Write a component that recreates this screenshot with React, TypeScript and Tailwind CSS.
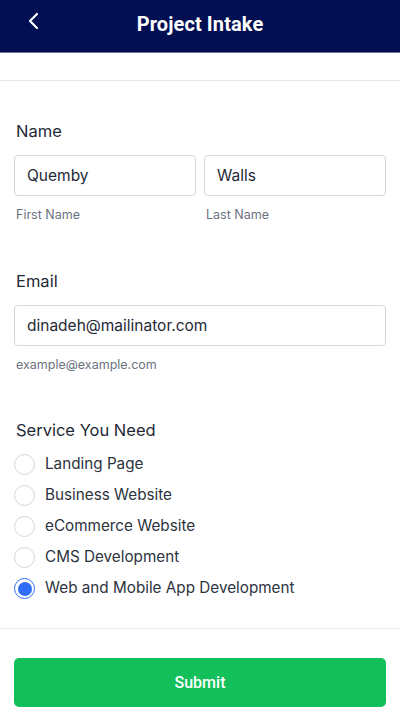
import React from "react";

const services = [
  "Landing Page",
  "Business Website",
  "eCommerce Website",
  "CMS Development",
  "Web and Mobile App Development",
];

export default function App() {
  return (
    <div className="w-[400px] h-[714px] bg-white overflow-hidden" style={{ fontFamily: "Inter, 'Noto Sans', sans-serif" }}>
      <header className="h-[53px] bg-[#020f52] border-b border-[#6c6f88] relative flex items-center justify-center pb-[4px]" style={{ fontFamily: "Roboto, sans-serif" }}>
        <svg className="absolute left-[26px] top-[12px]" width="16" height="18" viewBox="0 0 16 18" fill="none">
          <path d="M11 2 L4 9 L11 16" stroke="white" strokeWidth="2.2" strokeLinecap="round" strokeLinejoin="round" />
        </svg>
        <h1 className="text-white text-[20px] font-bold tracking-[0.1px]">Project Intake</h1>
      </header>
      <div className="h-[28px] border-b border-[#e6e6e6]" />
      <div className="px-[14px] pt-[38px]">
        <div className="pl-[2px] text-[16.5px] leading-[24px] text-[#1f2937] font-normal">Name</div>
        <div className="mt-[12px] grid grid-cols-2 gap-[8px]">
          <div>
            <div className="h-[41px] border border-[#d4d6da] rounded-[4px] flex items-center px-[12px] text-[15.5px] text-[#1f2937]">Quemby</div>
            <div className="mt-[11px] pl-[2px] text-[12.5px] leading-[16px] text-[#6b7280]">First Name</div>
          </div>
          <div>
            <div className="h-[41px] border border-[#d4d6da] rounded-[4px] flex items-center px-[12px] text-[15.5px] text-[#1f2937]">Walls</div>
            <div className="mt-[11px] pl-[2px] text-[12.5px] leading-[16px] text-[#6b7280]">Last Name</div>
          </div>
        </div>
        <div className="mt-[46px] pl-[2px] text-[16.5px] leading-[24px] text-[#1f2937] font-normal">Email</div>
        <div className="mt-[12px] h-[41px] border border-[#d4d6da] rounded-[4px] flex items-center px-[12px] text-[15.5px] text-[#1f2937]">dinadeh@mailinator.com</div>
        <div className="mt-[11px] pl-[2px] text-[12.5px] leading-[16px] text-[#6b7280]">example@example.com</div>
        <div className="mt-[45px] pl-[2px] text-[16.5px] leading-[24px] text-[#1f2937] font-normal">Service You Need</div>
        <div className="mt-[7px] flex flex-col">
          {services.map((s, i) => {
            const checked = i === services.length - 1;
            return (
              <div key={s} className="h-[31px] flex items-center gap-[10px]">
                {checked ? (
                  <span className="w-[21px] h-[21px] rounded-full border-[1.5px] border-[#2f6df6] flex items-center justify-center">
                    <span className="w-[14px] h-[14px] rounded-full bg-[#2f6df6]" />
                  </span>
                ) : (
                  <span className="w-[21px] h-[21px] rounded-full border border-[#d4d6da]" />
                )}
                <span className="text-[15.25px] text-[#2d3340]">{s}</span>
              </div>
            );
          })}
        </div>
      </div>
      <div className="mt-[24px] border-b border-[#ececec]" />
      <div className="px-[14px] pt-[29px]">
        <button className="w-full h-[49px] rounded-[5px] bg-[#12bf5b] text-white text-[16px] font-medium" style={{ fontFamily: "Roboto, sans-serif" }}>Submit</button>
      </div>
    </div>
  );
}
